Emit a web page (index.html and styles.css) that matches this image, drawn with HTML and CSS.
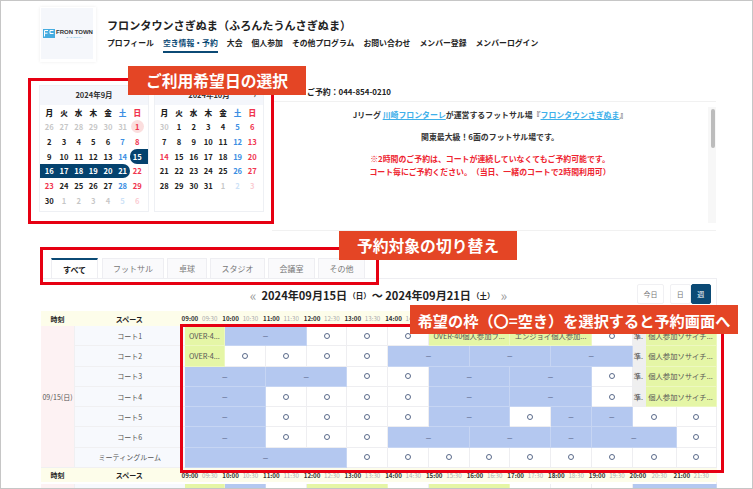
FILE: index.html
```html
<!DOCTYPE html>
<html lang="ja">
<head>
    <meta charset="UTF-8">
    <meta name="viewport" content="width=device-width, initial-scale=1.0">
    <title>フロンタウンさぎぬま</title>
    <link rel="stylesheet" href="styles.css">
</head>
<body>
<div class="page">
    <header class="site-header">
        <div class="logo-box">
            <div class="logo-inner">
                <svg class="logo-mark" width="12" height="9" viewBox="0 0 12 9">
                    <rect width="12" height="9" fill="#45ace0"/>
                    <path d="M1.5 1.5H5M1.5 1.5V7.5M1.5 4.2H4.5M7 1.5H10.5M7 1.5V4.5H10.5" stroke="#fff" stroke-width="1" fill="none"/>
                </svg>
                <div class="logo-words">
                    <div class="logo-name">FRON TOWN</div>
                    <div class="logo-sub">SAGINUMA</div>
                </div>
            </div>
        </div>
        <div class="site-info">
            <h1 class="site-title">フロンタウンさぎぬま（ふろんたうんさぎぬま）</h1>
            <nav class="site-nav">
                <a>プロフィール</a>
                <a class="active">空き情報・予約</a>
                <a>大会</a>
                <a>個人参加</a>
                <a>その他プログラム</a>
                <a>お問い合わせ</a>
                <a>メンバー登録</a>
                <a>メンバーログイン</a>
            </nav>
        </div>
    </header>

    <section class="top-section">
        <div class="calendars">
            <div class="cal">
                <div class="cal-head">2024年9月</div>
                <div class="cal-grid">
                    <b>月</b><b>火</b><b>水</b><b>木</b><b>金</b><b class="sat">土</b><b class="sun">日</b>
                    <i class="off">26</i><i class="off">27</i><i class="off">28</i><i class="off">29</i><i class="off">30</i><i class="off">31</i><i class="sun"><span class="today">1</span></i>
                    <i>2</i><i>3</i><i>4</i><i>5</i><i>6</i><i class="sat">7</i><i class="sun">8</i>
                    <i>9</i><i>10</i><i>11</i><i>12</i><i>13</i><i class="sat">14</i><i class="sel sel-first">15</i>
                    <i class="sel sel-row-start">16</i><i class="sel">17</i><i class="sel">18</i><i class="sel">19</i><i class="sel">20</i><i class="sel sel-last">21</i><i class="sun">22</i>
                    <i class="sun">23</i><i>24</i><i>25</i><i>26</i><i>27</i><i class="sat">28</i><i class="sun">29</i>
                    <i>30</i><i class="off">1</i><i class="off">2</i><i class="off">3</i><i class="off">4</i><i class="off sat">5</i><i class="off sun">6</i>
                </div>
            </div>
            <div class="cal">
                <div class="cal-head">2024年10月<span class="cal-next">›</span></div>
                <div class="cal-grid">
                    <b>月</b><b>火</b><b>水</b><b>木</b><b>金</b><b class="sat">土</b><b class="sun">日</b>
                    <i class="off">30</i><i>1</i><i>2</i><i>3</i><i>4</i><i class="sat">5</i><i class="sun">6</i>
                    <i>7</i><i>8</i><i>9</i><i>10</i><i>11</i><i class="sat">12</i><i class="sun">13</i>
                    <i class="sun">14</i><i>15</i><i>16</i><i>17</i><i>18</i><i class="sat">19</i><i class="sun">20</i>
                    <i>21</i><i>22</i><i>23</i><i>24</i><i>25</i><i class="sat">26</i><i class="sun">27</i>
                    <i>28</i><i>29</i><i>30</i><i>31</i><i class="off">1</i><i class="off sat">2</i><i class="off sun">3</i>
                </div>
            </div>
        </div>
        <div class="info">
            <div class="tel">ご予約：044-854-0210</div>
            <div class="info-box">
                <div class="info-text">
                    <p>Jリーグ <a>川崎フロンターレ</a>が運営するフットサル場『<a>フロンタウンさぎぬま</a>』</p>
                    <p class="gap">関東最大級！6面のフットサル場です。</p>
                    <p class="gap red">※2時間のご予約は、コートが連続していなくてもご予約可能です。</p>
                    <p class="red">コート毎にご予約ください。（当日、一緒のコートで2時間利用可）</p>
                </div>
                <div class="scroll-track"><div class="scroll-thumb"></div></div>
            </div>
        </div>
    </section>

    <div class="tabs">
        <div class="tab active t-all">すべて</div>
        <div class="tab t-futsal">フットサル</div>
        <div class="tab t-table">卓球</div>
        <div class="tab t-studio">スタジオ</div>
        <div class="tab t-room">会議室</div>
        <div class="tab t-room">その他</div>
    </div>

    <section class="card">
        <div class="toolbar">
            <div></div>
            <div class="range">
                <span class="arrow">«</span>
                <strong>2024年09月15日</strong><small>（日）</small><strong>〜 2024年09月21日</strong><small>（土）</small>
                <span class="arrow">»</span>
            </div>
            <div class="tool-btns">
                <div class="btn">今日</div>
                <div class="btn-group">
                    <div class="btn">日</div>
                    <div class="btn on">週</div>
                </div>
            </div>
        </div>

        <div class="table">
            <div class="head head-time">時刻</div>
            <div class="head head-space">スペース</div>
            <div class="tick hour">09:00</div><div class="tick">09:30</div><div class="tick hour">10:00</div><div class="tick">10:30</div><div class="tick hour">11:00</div><div class="tick">11:30</div><div class="tick hour">12:00</div><div class="tick">12:30</div><div class="tick hour">13:00</div><div class="tick">13:30</div><div class="tick hour">14:00</div><div class="tick">14:30</div><div class="tick tick-rest"></div>

            <div class="date-cell">09/15(日)</div>

            <div class="space">コート1</div>
            <div class="slot event s2">OVER-4...</div><div class="slot closed s4">—</div><div class="slot free s2"></div><div class="slot free s2"></div><div class="slot free s2"></div><div class="slot event s4">OVER-40個人参加フ...</div><div class="slot event s4">エンジョイ個人参加...</div><div class="slot free s2"></div><div class="slot prep">準.</div><div class="slot event s4">個人参加ソサイチ...</div>

            <div class="space">コート2</div>
            <div class="slot event s2">OVER-4...</div><div class="slot free s2"></div><div class="slot free s2"></div><div class="slot free s2"></div><div class="slot free s2"></div><div class="slot closed s4">—</div><div class="slot closed s4">—</div><div class="slot closed s4">—</div><div class="slot prep">準.</div><div class="slot event s4">個人参加ソサイチ...</div>

            <div class="space">コート3</div>
            <div class="slot closed s4">—</div><div class="slot closed s4">—</div><div class="slot free s2"></div><div class="slot free s2"></div><div class="slot closed s4">—</div><div class="slot closed s4">—</div><div class="slot free s2"></div><div class="slot prep">準.</div><div class="slot event s4">個人参加ソサイチ...</div>

            <div class="space">コート4</div>
            <div class="slot closed s4">—</div><div class="slot free s2"></div><div class="slot free s2"></div><div class="slot free s2"></div><div class="slot free s2"></div><div class="slot closed s4">—</div><div class="slot closed s4">—</div><div class="slot free s2"></div><div class="slot prep">準.</div><div class="slot event s4">個人参加ソサイチ...</div>

            <div class="space">コート5</div>
            <div class="slot closed s4">—</div><div class="slot free s2"></div><div class="slot free s2"></div><div class="slot free s2"></div><div class="slot free s2"></div><div class="slot closed s4">—</div><div class="slot free s2"></div><div class="slot closed s2">—</div><div class="slot closed s2">—</div><div class="slot free s3"></div><div class="slot free s2"></div>

            <div class="space">コート6</div>
            <div class="slot closed s4">—</div><div class="slot free s2"></div><div class="slot free s2"></div><div class="slot free s2"></div><div class="slot closed s4">—</div><div class="slot closed s4">—</div><div class="slot closed s2">—</div><div class="slot closed s5">—</div><div class="slot free s2"></div>

            <div class="space">ミーティングルーム</div>
            <div class="slot closed s8">—</div><div class="slot free s2"></div><div class="slot free s2"></div><div class="slot free s2"></div><div class="slot free s2"></div><div class="slot free s2"></div><div class="slot free s2"></div><div class="slot free s2"></div><div class="slot free s3"></div><div class="slot free s2"></div>

            <div class="head head-time">時刻</div>
            <div class="head head-space">スペース</div>
            <div class="tick hour">09:00</div><div class="tick">09:30</div><div class="tick hour">10:00</div><div class="tick">10:30</div><div class="tick hour">11:00</div><div class="tick">11:30</div><div class="tick hour">12:00</div><div class="tick">12:30</div><div class="tick hour">13:00</div><div class="tick">13:30</div><div class="tick hour">14:00</div><div class="tick">14:30</div><div class="tick hour">15:00</div><div class="tick">15:30</div><div class="tick hour">16:00</div><div class="tick">16:30</div><div class="tick hour">17:00</div><div class="tick">17:30</div><div class="tick hour">18:00</div><div class="tick">18:30</div><div class="tick hour">19:00</div><div class="tick">19:30</div><div class="tick hour s2">20:00</div><div class="tick">20:30</div><div class="tick hour">21:00</div><div class="tick">21:30</div>

            <div class="row-gap"></div>

            <div class="date-next"></div>
            <div class="space"></div>
            <div class="slot event s2"></div><div class="slot closed s2"></div><div class="slot s2"></div><div class="slot event s4"></div><div class="slot s2"></div><div class="slot event s4"></div><div class="slot s2"></div><div class="slot s2"></div><div class="slot s2"></div><div class="slot closed s5"></div>
        </div>
    </section>

    <div class="mark mark-cal"></div>
    <div class="mark mark-tabs"></div>
    <div class="mark mark-slots"></div>
    <div class="callout callout-cal">ご利用希望日の選択</div>
    <div class="callout callout-tabs">予約対象の切り替え</div>
    <div class="callout callout-slots">希望の枠（〇=空き）を選択すると予約画面へ</div>
</div>
</body>
</html>
```

FILE: styles.css
```css
body {
    margin: 0;
    font-family: "Noto Sans CJK JP", "Noto Sans", sans-serif;
    color: #222;
    background-color: #fff;
}
.page {
    position: relative;
    box-sizing: border-box;
    width: 753px;
    height: 489px;
    padding: 6px 36px 0 39px;
    overflow: hidden;
    border: 1px solid #c6c6c6;
}

/* header */
.site-header {
    display: flex;
    gap: 11px;
}
.logo-box {
    box-sizing: border-box;
    width: 56px;
    height: 55px;
    padding: 1px 3px 3px 1px;
    background-color: #fff;
    box-shadow: 0 0 3px rgba(0, 0, 0, 0.08);
}
.logo-inner {
    display: flex;
    align-items: center;
    gap: 1px;
    height: 100%;
    padding-left: 2px;
    background-color: #f5f7fb;
}
.logo-name {
    font-family: "Liberation Sans", sans-serif;
    font-size: 6px;
    font-weight: bold;
    line-height: 7px;
    white-space: nowrap;
    color: #333;
}
.logo-sub {
    font-family: "Liberation Sans", sans-serif;
    font-size: 2.5px;
    line-height: 3px;
    letter-spacing: 0.4px;
    text-align: center;
    color: #45ace0;
}
.logo-mark {
    display: block;
    flex: none;
}
.site-title {
    margin: 10px 0 0;
    font-size: 11.1px;
    font-weight: 700;
    line-height: 16px;
    white-space: nowrap;
}
.site-nav {
    display: flex;
    gap: 9px;
    margin-top: 4px;
    font-size: 7.85px;
    font-weight: 700;
    line-height: 12px;
    white-space: nowrap;
}
.site-nav a {
    padding-bottom: 2px;
}
.site-nav a.active {
    color: #0b4a75;
    border-bottom: 2px solid #0b4a75;
}

/* calendars + info */
.top-section {
    display: flex;
    gap: 8px;
    height: 146px;
    margin: 23px 0 0 -1px;
}
.calendars {
    display: flex;
    gap: 5px;
}
.cal {
    box-sizing: border-box;
    width: 110px;
    height: 127px;
    border: 1px solid #eef0f4;
    overflow: hidden;
}
.cal-head {
    position: relative;
    height: 19px;
    font-size: 7.5px;
    font-weight: 700;
    line-height: 17px;
    text-align: center;
    color: #333;
    background-color: #f4f6fb;
}
.cal-next {
    position: absolute;
    right: 7px;
}
.cal-grid {
    display: grid;
    grid-template-columns: repeat(7, 14.67px);
    grid-auto-rows: 14.67px;
    padding: 0 2px;
    font-size: 7.6px;
    font-weight: 700;
}
.cal-grid b, .cal-grid i {
    display: flex;
    align-items: center;
    justify-content: center;
    font-style: normal;
}
.cal-grid .sat { color: #3d8fe3; }
.cal-grid .sun { color: #f0354f; }
.cal-grid .off { opacity: 0.25; }
.cal-grid .sel {
    color: #fff;
    background-color: #04426e;
}
.cal-grid .sel-first {
    margin-right: -3.3px;
    padding-right: 3.3px;
    border-radius: 7px 0 0 7px;
}
.cal-grid .sel-row-start {
    margin-left: -2px;
    padding-left: 2px;
}
.cal-grid .sel-last {
    border-radius: 0 7px 7px 0;
}
.today {
    display: flex;
    align-items: center;
    justify-content: center;
    width: 13px;
    height: 13px;
    border-radius: 50%;
    background-color: #fbdede;
}
.info {
    width: 444px;
}
.tel {
    height: 16px;
    padding-left: 35px;
    font-size: 7.9px;
    font-weight: 700;
    line-height: 13px;
    white-space: nowrap;
}
.info-box {
    display: flex;
    box-sizing: border-box;
    height: 130px;
    border-top: 1px solid #f1f1f1;
    border-bottom: 1px solid #f1f1f1;
}
.info-text {
    flex: 1;
    padding-top: 6px;
    font-size: 7.9px;
    font-weight: 700;
    line-height: 13px;
    text-align: center;
    color: #333;
}
.info-text p {
    margin: 0;
}
.info-text p.gap {
    margin-top: 9px;
}
.info-text .red {
    color: #ee2430;
}
.info-text a {
    color: #3fb0ea;
    text-decoration: underline;
}
.scroll-track {
    width: 8px;
    height: 116px;
    margin-top: 5px;
    background-color: #f7f7f7;
}
.scroll-thumb {
    width: 4px;
    height: 39px;
    margin: 2px 0 0 3px;
    border-radius: 2px;
    background-color: #bcbcbc;
}

/* tabs */
.tabs {
    display: flex;
    gap: 3px;
    height: 20px;
    margin-top: 27px;
    padding-left: 11px;
}
.tab {
    display: flex;
    align-items: center;
    justify-content: center;
    box-sizing: border-box;
    font-size: 8px;
    color: #777;
    background-color: #fafafc;
    border: 1px solid #eeeef2;
    border-bottom: none;
}
.tab.active {
    font-weight: 700;
    color: #222;
    background-color: #fff;
    border-top: 2px solid #0b4a75;
}
.t-all { width: 47px; margin-right: 1px; }
.t-futsal { width: 62px; }
.t-table { width: 40px; }
.t-studio { width: 55px; }
.t-room { width: 47px; }

/* timetable */
.card {
    box-sizing: border-box;
    margin-left: 1px;
    width: 676px;
    border-top: 1px solid #eeeef2;
    border-right: 1px solid #eeeef2;
}
.toolbar {
    display: grid;
    grid-template-columns: 1fr auto 1fr;
    align-items: start;
    height: 32px;
}
.range {
    display: flex;
    align-items: center;
    height: 32px;
    white-space: nowrap;
}
.range strong {
    font-size: 11.1px;
    font-weight: 700;
}
.range small {
    margin: 0 1px;
    font-size: 7.5px;
    font-weight: 700;
}
.arrow {
    margin: 0 5px;
    font-size: 14px;
    line-height: 1;
    color: #999;
}
.tool-btns {
    display: flex;
    justify-content: flex-end;
    gap: 6px;
    padding: 5px 5px 0 0;
}
.btn-group {
    display: flex;
}
.btn {
    display: flex;
    align-items: center;
    justify-content: center;
    box-sizing: border-box;
    width: 27px;
    height: 20px;
    font-size: 7px;
    color: #777;
    border: 1px solid #f0f0f3;
    border-radius: 2px;
}
.btn-group .btn {
    width: 20.5px;
}
.btn.on {
    color: #fff;
    background-color: #0b4a75;
    border-color: #0b4a75;
}
.table {
    display: grid;
    grid-template-columns: 33px 110.6px repeat(22, 20.36px) 13px 9px 22px 20px 20px;
    grid-template-rows: 15px repeat(7, 20.3px) 14px 2px 20px;
    width: 675px;
}
.head {
    display: flex;
    align-items: center;
    justify-content: center;
    font-size: 7px;
    font-weight: 700;
    background-color: #fdfdea;
}
.tick {
    font-size: 6.2px;
    line-height: 15px;
    white-space: nowrap;
    text-indent: -3px;
    color: #aaa;
    background-color: #fdfdea;
}
.tick.hour {
    font-weight: 700;
    color: #333;
}
.tick.s2 {
    grid-column: span 2;
}
/* the first header row runs under the third callout from here on */
.tick-rest {
    grid-column: span 15;
}
.row-gap {
    grid-column: 1 / -1;
}
.date-cell {
    display: flex;
    grid-row: span 7;
    align-items: center;
    justify-content: center;
    font-size: 7px;
    color: #555;
    white-space: nowrap;
    background-color: #fdf2f3;
    border-bottom: 1px solid #f0f0f2;
}
.date-next {
    background-color: #fdf2f3;
}
.space {
    display: flex;
    align-items: center;
    justify-content: center;
    font-size: 7px;
    color: #555;
    background-color: #f7f9fd;
    border-left: 1px solid #f0f0f2;
    border-bottom: 1px solid #f0f0f2;
}
.slot {
    display: flex;
    align-items: center;
    justify-content: center;
    box-sizing: border-box;
    min-width: 0;
    overflow: hidden;
    font-size: 7.3px;
    color: #555;
    white-space: nowrap;
    border-right: 1px solid #eeeef1;
    border-bottom: 1px solid #eeeef1;
}
.s2 { grid-column: span 2; }
.s3 { grid-column: span 3; }
.s4 { grid-column: span 4; }
.s5 { grid-column: span 5; }
.s8 { grid-column: span 8; }
.free::before {
    content: "";
    box-sizing: border-box;
    width: 6px;
    height: 6px;
    border: 1.4px solid #5a6a8a;
    border-radius: 50%;
}
.closed {
    font-size: 6px;
    font-weight: 700;
    color: #5e6e90;
    background-color: #b4c8f0;
    border-color: #c6d5f3;
}
.event {
    background-color: #e5f6a6;
    border-color: #edf8c0;
}
.prep {
    background-color: #efefef;
}

/* annotations laid over the page */
.mark {
    position: absolute;
    box-sizing: border-box;
    border: 3.5px solid #e60012;
}
.mark-cal {
    left: 27px;
    top: 77px;
    width: 246px;
    height: 146px;
}
.mark-tabs {
    left: 39px;
    top: 246px;
    width: 339px;
    height: 38px;
}
.mark-slots {
    left: 179px;
    top: 323px;
    width: 544px;
    height: 149px;
}
.callout {
    position: absolute;
    display: flex;
    align-items: center;
    justify-content: center;
    font-size: 15.8px;
    font-weight: 700;
    color: #fff;
    white-space: nowrap;
    background-color: #e44525;
}
.callout-cal {
    left: 127px;
    top: 65px;
    width: 178px;
    height: 29px;
}
.callout-tabs {
    left: 338px;
    top: 230px;
    width: 178px;
    height: 29px;
}
.callout-slots {
    left: 409px;
    top: 304px;
    width: 328px;
    height: 29px;
    font-size: 15.2px;
}
```
